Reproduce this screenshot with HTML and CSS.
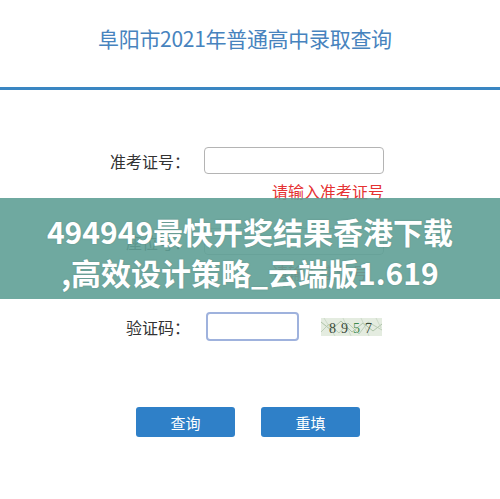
FILE: index.html
```html
<!DOCTYPE html>
<html lang="zh-CN">
<head>
<meta charset="utf-8">
<title>阜阳市2021年普通高中录取查询</title>
<link rel="stylesheet" href="styles.css">
</head>
<body>
<div class="page">
  <header class="header">
    <h1 class="title">阜阳市2021年普通高中录取查询</h1>
  </header>
  <div class="rule"></div>
  <form class="form">
    <div class="row row-1">
      <label class="label">准考证号：</label>
      <input class="field" type="text">
    </div>
    <div class="hint">请输入准考证号</div>
    <div class="row row-2">
      <label class="label">座位号：</label>
      <input class="field" type="text">
    </div>
    <div class="hint">请输入座位号</div>
    <div class="row row-3">
      <label class="label">验证码：</label>
      <input class="field field-code" type="text">
      <div class="captcha">
        <svg class="noise" width="61" height="18" viewBox="0 0 61 18">
          <rect width="61" height="18" fill="#e4ece0"/>
          <path d="M0 4 L10 12 L20 3 L31 14 L42 5 L52 13 L61 6" stroke="#9fb99a" stroke-width="0.8" fill="none"/>
          <path d="M0 14 L8 6 L18 15 L27 5 L38 16 L47 4 L61 12" stroke="#b3c7ad" stroke-width="0.8" fill="none"/>
          <path d="M3 0 L14 18 M22 0 L30 18 M40 0 L48 18 M55 0 L60 10" stroke="#c3d3bf" stroke-width="0.7"/>
          <text x="8" y="14.5" class="d">8</text>
          <text x="20" y="14.5" class="d">9</text>
          <text x="32" y="14.5" class="d g">5</text>
          <text x="44" y="14.5" class="d">7</text>
        </svg>
      </div>
    </div>
    <div class="buttons">
      <button class="btn" type="button">查询</button>
      <button class="btn" type="button">重填</button>
    </div>
  </form>
  <div class="overlay">
    <p class="overlay-text">494949最快开奖结果香港下载<br>,高效设计策略_云端版1.619</p>
  </div>
</div>
</body>
</html>
```
FILE: styles.css
```css
html, body {
  margin: 0;
  padding: 0;
  background: #ffffff;
}
body {
  font-family: "Noto Sans CJK SC", "Noto Sans", sans-serif;
  color: #333333;
}
.page {
  position: relative;
  width: 500px;
  height: 499px;
  overflow: hidden;
}
.header {
  height: 87px;
  box-sizing: border-box;
  padding-top: 24px;
  padding-left: 98px;
}
.title {
  margin: 0;
  font-size: 21px;
  line-height: 28px;
  font-weight: normal;
  color: #4783be;
  letter-spacing: -0.3px;
}
.rule {
  height: 3px;
  background: #3a86c2;
}
.form {
  margin: 0;
  padding-top: 57px;
}
.row {
  display: flex;
  align-items: center;
  height: 27px;
}
.row-2 { margin-top: 27px; }
.row-3 { margin-top: 30px; height: 29px; }
.label {
  width: 190px;
  text-align: right;
  font-size: 16px;
  color: #333333;
  line-height: 20px;
}
.field {
  margin: 0 0 0 14px;
  width: 180px;
  height: 27px;
  box-sizing: border-box;
  border: 1px solid #b4b4b4;
  border-radius: 4px;
  background: #ffffff;
  padding: 0 6px;
}
.field-code {
  margin-left: 16px;
  width: 93px;
  height: 29px;
  border: 2px solid #9fb2dd;
}
.captcha {
  margin-left: 22px;
  width: 61px;
  height: 18px;
  display: flex;
}
.noise { display: block; }
.d {
  font-family: "Liberation Serif", serif;
  font-size: 14px;
  fill: #3a4a3a;
}
.g { fill: #3e8a4e; }
.hint {
  margin-top: 7px;
  padding-left: 272px;
  font-size: 16px;
  line-height: 20px;
  color: #e53232;
}
.buttons {
  display: flex;
  gap: 26px;
  margin-top: 66px;
  padding-left: 136px;
}
.btn {
  width: 99px;
  height: 30px;
  border: none;
  border-radius: 3px;
  background: #2f80c8;
  color: #ffffff;
  font-family: "Noto Sans CJK SC", sans-serif;
  font-size: 15px;
  padding: 0;
}
.overlay {
  position: absolute;
  left: 0;
  top: 198px;
  width: 500px;
  height: 101px;
  background: rgba(95, 160, 150, 0.9);
  box-sizing: border-box;
  padding-top: 13px;
}
.overlay-text {
  margin: 0;
  text-align: center;
  color: #ffffff;
  font-family: "Noto Sans CJK SC", sans-serif;
  font-weight: bold;
  font-size: 30px;
  line-height: 41px;
  text-shadow: 0 0 2px rgba(0,0,0,0.15);
}
```
